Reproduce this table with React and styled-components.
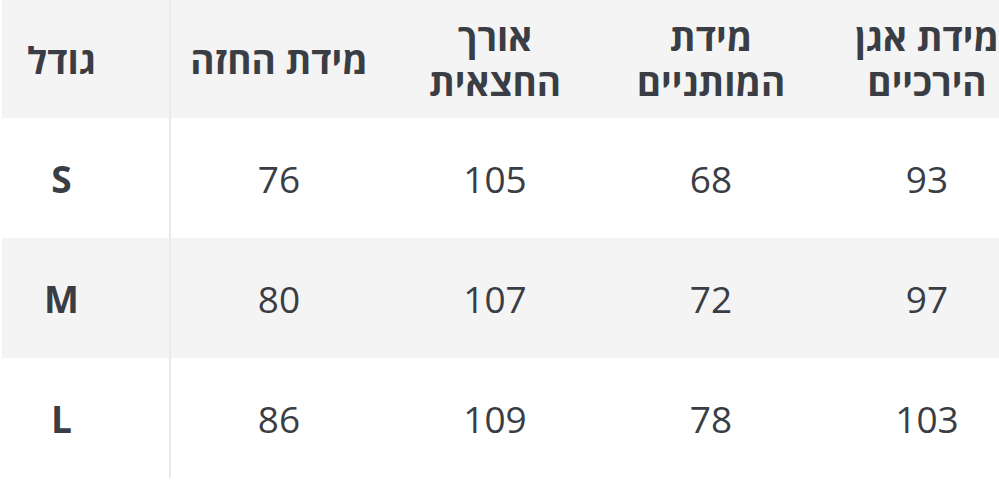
import styled, { createGlobalStyle } from "styled-components"

const GlobalStyle = createGlobalStyle`
  html, body {
    margin: 0;
    padding: 0;
    background: #ffffff;
    overflow: hidden;
  }
  body {
    font-family: "Open Sans", "Noto Sans", "DejaVu Sans", sans-serif;
  }
`

const Page = styled.div`
  width: 999px;
  height: 482px;
  padding-left: 2px;
  box-sizing: border-box;
  overflow: hidden;
`

const Table = styled.div`
  display: flex;
  flex-direction: column;
  width: 1100px;
`

const Row = styled.div`
  display: grid;
  grid-template-columns: 169px repeat(4, 216px);
  height: ${(p) => (p.$head ? "118px" : "120px")};
  background: ${(p) => (p.$shade ? "#f4f4f4" : "#ffffff")};
`

const Cell = styled.div`
  display: flex;
  align-items: center;
  justify-content: center;
  box-sizing: border-box;
  padding: 0 10px;
  direction: rtl;
  text-align: center;
  color: #3a3d44;
  font-size: ${(p) => (p.$head ? "37px" : "37px")};
  font-weight: ${(p) => (p.$head || p.$size ? 700 : 400)};
  line-height: 45px;
`

const SizeCell = styled(Cell)`
  border-right: 2px solid #e9e9e9;
  padding: 0 48px 0 0;
`

const headers = ["מידת החזה", "אורך החצאית", "מידת המותניים", "מידת אגן הירכיים"]

const rows = [
  { size: "S", values: [76, 105, 68, 93] },
  { size: "M", values: [80, 107, 72, 97] },
  { size: "L", values: [86, 109, 78, 103] },
]

const App = () => {
  return (
    <Page>
      <GlobalStyle />
      <Table>
        <Row $head $shade>
          <SizeCell $head>גודל</SizeCell>
          {headers.map((h) => (
            <Cell $head key={h}>{h}</Cell>
          ))}
        </Row>
        {rows.map((r, i) => (
          <Row key={r.size} $shade={i % 2 === 1}>
            <SizeCell $size>{r.size}</SizeCell>
            {r.values.map((v, j) => (
              <Cell key={j}>{v}</Cell>
            ))}
          </Row>
        ))}
      </Table>
    </Page>
  )
}

export default App
